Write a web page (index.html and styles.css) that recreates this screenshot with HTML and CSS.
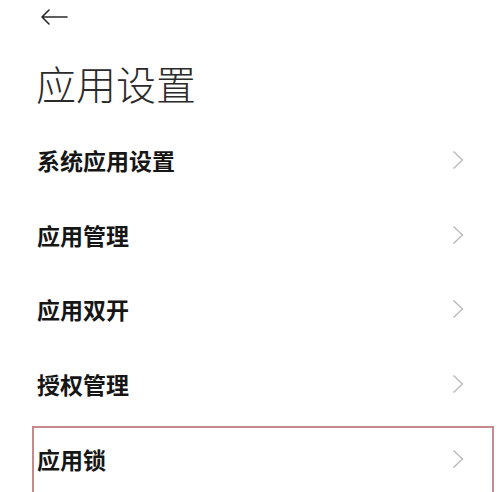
FILE: index.html
```html
<!DOCTYPE html>
<html lang="zh-CN">
<head>
<meta charset="utf-8">
<link rel="stylesheet" href="styles.css">
</head>
<body>
<div class="page">
  <header class="topbar">
    <svg class="back" width="28" height="16" viewBox="0 0 28 16"><path d="M27 8H2M9 1L2 8L9 15" fill="none" stroke="#2a2a2a" stroke-width="1.6" stroke-linecap="round" stroke-linejoin="round"/></svg>
  </header>
  <h1 class="title">应用设置</h1>
  <ul class="list">
    <li class="row"><span class="label">系统应用设置</span><svg class="chev" width="12" height="20" viewBox="0 0 12 20"><path d="M1.5 1.5L10.5 10L1.5 18.5" fill="none" stroke="#b8b8b8" stroke-width="1.3"/></svg></li>
    <li class="row"><span class="label">应用管理</span><svg class="chev" width="12" height="20" viewBox="0 0 12 20"><path d="M1.5 1.5L10.5 10L1.5 18.5" fill="none" stroke="#b8b8b8" stroke-width="1.3"/></svg></li>
    <li class="row"><span class="label">应用双开</span><svg class="chev" width="12" height="20" viewBox="0 0 12 20"><path d="M1.5 1.5L10.5 10L1.5 18.5" fill="none" stroke="#b8b8b8" stroke-width="1.3"/></svg></li>
    <li class="row"><span class="label">授权管理</span><svg class="chev" width="12" height="20" viewBox="0 0 12 20"><path d="M1.5 1.5L10.5 10L1.5 18.5" fill="none" stroke="#b8b8b8" stroke-width="1.3"/></svg></li>
    <li class="row marked"><span class="label">应用锁</span><svg class="chev" width="12" height="20" viewBox="0 0 12 20"><path d="M1.5 1.5L10.5 10L1.5 18.5" fill="none" stroke="#b8b8b8" stroke-width="1.3"/></svg></li>
  </ul>
</div>
</body>
</html>
```
FILE: styles.css
```css
html, body {
  margin: 0;
  padding: 0;
  background: #ffffff;
}
body {
  font-family: "Noto Sans CJK SC", "Noto Sans", sans-serif;
  overflow: hidden;
}
.page {
  width: 500px;
  height: 492px;
  display: flex;
  flex-direction: column;
  overflow: hidden;
}
.topbar {
  height: 34px;
  padding: 9px 0 0 40px;
  box-sizing: border-box;
  flex-shrink: 0;
}
.back {
  display: block;
}
.title {
  margin: 25px 0 0 36px;
  font-size: 40px;
  line-height: 48px;
  font-weight: 300;
  color: #2a2a2a;
  flex-shrink: 0;
}
.list {
  list-style: none;
  margin: 16px 0 0 0;
  padding: 0;
  flex-shrink: 0;
}
.row {
  height: 74.6px;
  margin: 0 6px 0 32px;
  padding: 0 30px 0 5px;
  display: flex;
  align-items: center;
  justify-content: space-between;
  box-sizing: border-box;
}
.label {
  font-size: 23px;
  font-weight: 600;
  color: #161616;
}
.chev {
  display: block;
}
.row.marked {
  margin-top: 5px;
  border: 2px solid #c48a8c;
  padding: 0 28px 10px 3px;
}
```
